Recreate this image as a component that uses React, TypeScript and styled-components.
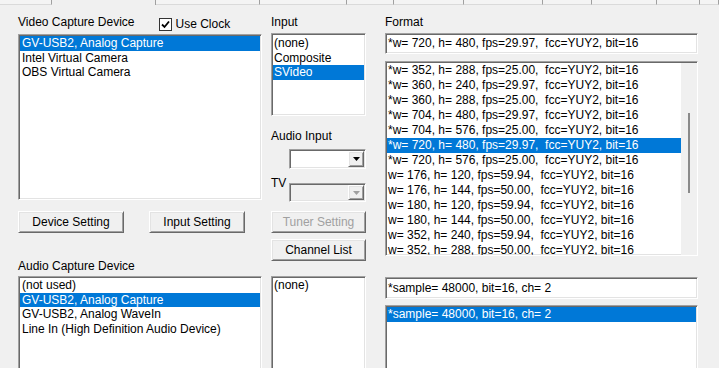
import React from "react";
import styled, { createGlobalStyle, css } from "styled-components";

const Global = createGlobalStyle`
  html, body { margin: 0; padding: 0; background: #f0f0f0; }
  body { font-family: "Liberation Sans", Arial, sans-serif; font-size: 12px; color: #000; }
`;

const sunken = css`
  box-sizing: border-box;
  border: 1px solid;
  border-color: #a0a0a0 #ffffff #ffffff #a0a0a0;
  box-shadow: inset 1px 1px 0 #696969, inset -1px -1px 0 #e3e3e3;
  padding: 1px;
`;

const raised = css`
  box-sizing: border-box;
  border: 1px solid;
  border-color: #ffffff #696969 #696969 #ffffff;
  box-shadow: inset 1px 1px 0 #e3e3e3, inset -1px -1px 0 #a0a0a0;
`;

const Page = styled.div`
  width: 719px;
  height: 368px;
  overflow: hidden;
  background: #f0f0f0;
`;

const TabStrip = styled.div`
  display: flex;
  height: 5px;
`;

const Tab = styled.div<{ $w: number; $active?: boolean }>`
  flex: 0 0 ${(p) => p.$w}px;
  box-sizing: border-box;
  height: 5px;
  border-right: 1px solid #a0a0a0;
  border-bottom: ${(p) => (p.$active ? "none" : "1px solid #dadada")};
  background: ${(p) => (p.$active ? "#f0f0f0" : "#f4f4f4")};
`;

const Columns = styled.div`
  display: flex;
  padding-left: 18px;
`;

const Column = styled.div<{ $w: number; $ml?: number }>`
  display: flex;
  flex-direction: column;
  width: ${(p) => p.$w}px;
  margin-left: ${(p) => p.$ml ?? 0}px;
`;

const HeadRow = styled.div<{ $h: number }>`
  display: flex;
  align-items: flex-start;
  height: ${(p) => p.$h}px;
  margin-top: 10px;
`;

const Label = styled.div<{ $mt?: number; $w?: number }>`
  line-height: 14px;
  height: 14px;
  white-space: nowrap;
  margin-top: ${(p) => p.$mt ?? 0}px;
  ${(p) => (p.$w ? `width: ${p.$w}px;` : "")}
`;

const CheckWrap = styled.label`
  display: flex;
  align-items: center;
  gap: 4px;
  margin-left: 24px;
  margin-top: 2px;
  line-height: 14px;
`;

const CheckBox = styled.span`
  box-sizing: border-box;
  width: 13px;
  height: 13px;
  border: 1px solid #333;
  background: #fff;
  display: flex;
  align-items: center;
  justify-content: center;
`;

const ListBox = styled.div<{ $h: number; $mt?: number; $pt?: number }>`
  ${sunken};
  background: #fff;
  height: ${(p) => p.$h}px;
  margin-top: ${(p) => p.$mt ?? 0}px;
  padding-top: ${(p) => p.$pt ?? 1}px;
  overflow: hidden;
`;

const Row = styled.div<{ $sel?: boolean; $h: number; $pl?: number }>`
  height: ${(p) => p.$h}px;
  line-height: ${(p) => p.$h}px;
  padding-left: ${(p) => p.$pl ?? 2}px;
  white-space: pre;
  overflow: hidden;
  background: ${(p) => (p.$sel ? "#0078d7" : "transparent")};
  color: ${(p) => (p.$sel ? "#fff" : "#000")};
`;

const ScrollList = styled.div<{ $h: number; $mt?: number }>`
  ${sunken};
  background: #fff;
  height: ${(p) => p.$h}px;
  margin-top: ${(p) => p.$mt ?? 0}px;
  display: flex;
  padding-right: 0;
  padding-bottom: 0;
  padding-top: 1px;
  overflow: hidden;
`;

const ScrollRows = styled.div`
  flex: 1;
  overflow: hidden;
`;

const ScrollBar = styled.div`
  flex: 0 0 16px;
  background: #f0f0f0;
  display: flex;
  justify-content: center;
  padding-top: 50px;
  box-sizing: border-box;
`;

const Thumb = styled.div`
  width: 2px;
  height: 80px;
  background: #8a8a8a;
`;

const Edit = styled.div<{ $h: number; $mt?: number }>`
  ${sunken};
  background: #fff;
  height: ${(p) => p.$h}px;
  margin-top: ${(p) => p.$mt ?? 0}px;
  line-height: ${(p) => p.$h - 4}px;
  padding-left: 2px;
  white-space: pre;
`;

const ButtonRow = styled.div`
  display: flex;
  gap: 25px;
  margin-top: 11px;
`;

const Button = styled.div<{ $w?: number; $mt?: number; $disabled?: boolean }>`
  ${raised};
  background: #f0f0f0;
  height: 22px;
  ${(p) => (p.$w ? `width: ${p.$w}px;` : "")}
  margin-top: ${(p) => p.$mt ?? 0}px;
  display: flex;
  align-items: center;
  justify-content: center;
  color: ${(p) => (p.$disabled ? "#a0a0a0" : "#000")};
  white-space: nowrap;
`;

const Combo = styled.div<{ $h: number; $disabled?: boolean; $ml?: number; $mt?: number }>`
  ${sunken};
  width: 77px;
  height: ${(p) => p.$h}px;
  margin-left: ${(p) => p.$ml ?? 0}px;
  margin-top: ${(p) => p.$mt ?? 0}px;
  background: ${(p) => (p.$disabled ? "#f0f0f0" : "#fff")};
  display: flex;
  justify-content: flex-end;
`;

const ComboButton = styled.div`
  ${raised};
  background: #f0f0f0;
  width: 16px;
  height: 100%;
  display: flex;
  align-items: center;
  justify-content: center;
`;

const TVRow = styled.div`
  display: flex;
  align-items: flex-start;
  margin-top: 7px;
`;

const Arrow = ({ color }: { color: string }) => (
  <svg width="7" height="4" viewBox="0 0 7 4">
    <polygon points="0,0 7,0 3.5,4" fill={color} />
  </svg>
);

const formats = [
  "*w= 352, h= 288, fps=25.00,  fcc=YUY2, bit=16",
  "*w= 360, h= 240, fps=29.97,  fcc=YUY2, bit=16",
  "*w= 360, h= 288, fps=25.00,  fcc=YUY2, bit=16",
  "*w= 704, h= 480, fps=29.97,  fcc=YUY2, bit=16",
  "*w= 704, h= 576, fps=25.00,  fcc=YUY2, bit=16",
  "*w= 720, h= 480, fps=29.97,  fcc=YUY2, bit=16",
  "*w= 720, h= 576, fps=25.00,  fcc=YUY2, bit=16",
  "w= 176, h= 120, fps=59.94,  fcc=YUY2, bit=16",
  "w= 176, h= 144, fps=50.00,  fcc=YUY2, bit=16",
  "w= 180, h= 120, fps=59.94,  fcc=YUY2, bit=16",
  "w= 180, h= 144, fps=50.00,  fcc=YUY2, bit=16",
  "w= 352, h= 240, fps=59.94,  fcc=YUY2, bit=16",
  "w= 352, h= 288, fps=50.00,  fcc=YUY2, bit=16",
];

const tabs = [
  { w: 52 }, { w: 104, active: true }, { w: 104 }, { w: 87 }, { w: 47 },
  { w: 70 }, { w: 79 }, { w: 49 }, { w: 65 }, { w: 43 }, { w: 19 },
];

export default function App() {
  return (
    <Page>
      <Global />
      <TabStrip>
        {tabs.map((t, i) => (
          <Tab key={i} $w={t.w} $active={t.active} />
        ))}
      </TabStrip>
      <Columns>
        <Column $w={244}>
          <HeadRow $h={19}>
            <Label>Video Capture Device</Label>
            <CheckWrap>
              <CheckBox>
                <svg width="9" height="9" viewBox="0 0 9 9">
                  <polyline points="1,4.5 3.5,7 8,1.5" fill="none" stroke="#000" strokeWidth="1.8" />
                </svg>
              </CheckBox>
              <span>Use Clock</span>
            </CheckWrap>
          </HeadRow>
          <ListBox $h={166}>
            <Row $h={14.5} $sel>GV-USB2, Analog Capture</Row>
            <Row $h={14.5}>Intel Virtual Camera</Row>
            <Row $h={14.5}>OBS Virtual Camera</Row>
          </ListBox>
          <ButtonRow>
            <Button $w={106}>Device Setting</Button>
            <Button $w={96}>Input Setting</Button>
          </ButtonRow>
          <Label $mt={26}>Audio Capture Device</Label>
          <ListBox $h={100} $mt={3}>
            <Row $h={14.5}>(not used)</Row>
            <Row $h={14.5} $sel>GV-USB2, Analog Capture</Row>
            <Row $h={14.5}>GV-USB2, Analog WaveIn</Row>
            <Row $h={14.5}>Line In (High Definition Audio Device)</Row>
          </ListBox>
        </Column>

        <Column $w={95} $ml={9}>
          <HeadRow $h={18}>
            <Label>Input</Label>
          </HeadRow>
          <ListBox $h={83} $pt={2}>
            <Row $h={14.5} $pl={1}>(none)</Row>
            <Row $h={14.5} $pl={1}>Composite</Row>
            <Row $h={14.5} $pl={1} $sel>SVideo</Row>
          </ListBox>
          <Label $mt={13}>Audio Input</Label>
          <Combo $h={20} $ml={18} $mt={6}>
            <ComboButton>
              <Arrow color="#000" />
            </ComboButton>
          </Combo>
          <TVRow>
            <Label $w={18}>TV</Label>
            <Combo $h={19} $mt={7} $disabled>
              <ComboButton>
                <Arrow color="#a0a0a0" />
              </ComboButton>
            </Combo>
          </TVRow>
          <Button $mt={9} $disabled>Tuner Setting</Button>
          <Button $mt={6}>Channel List</Button>
          <ListBox $h={100} $mt={15}>
            <Row $h={14.5} $pl={1}>(none)</Row>
          </ListBox>
        </Column>

        <Column $w={313} $ml={19}>
          <HeadRow $h={18}>
            <Label>Format</Label>
          </HeadRow>
          <Edit $h={21}>*w= 720, h= 480, fps=29.97,  fcc=YUY2, bit=16</Edit>
          <ScrollList $h={195} $mt={7}>
            <ScrollRows>
              {formats.map((f, i) => (
                <Row key={i} $h={15} $pl={1} $sel={i === 5}>
                  {f}
                </Row>
              ))}
            </ScrollRows>
            <ScrollBar>
              <Thumb />
            </ScrollBar>
          </ScrollList>
          <Edit $h={22} $mt={21}>*sample= 48000, bit=16, ch= 2</Edit>
          <ListBox $h={70} $mt={6}>
            <Row $h={15} $pl={1} $sel>*sample= 48000, bit=16, ch= 2</Row>
          </ListBox>
        </Column>
      </Columns>
    </Page>
  );
}
